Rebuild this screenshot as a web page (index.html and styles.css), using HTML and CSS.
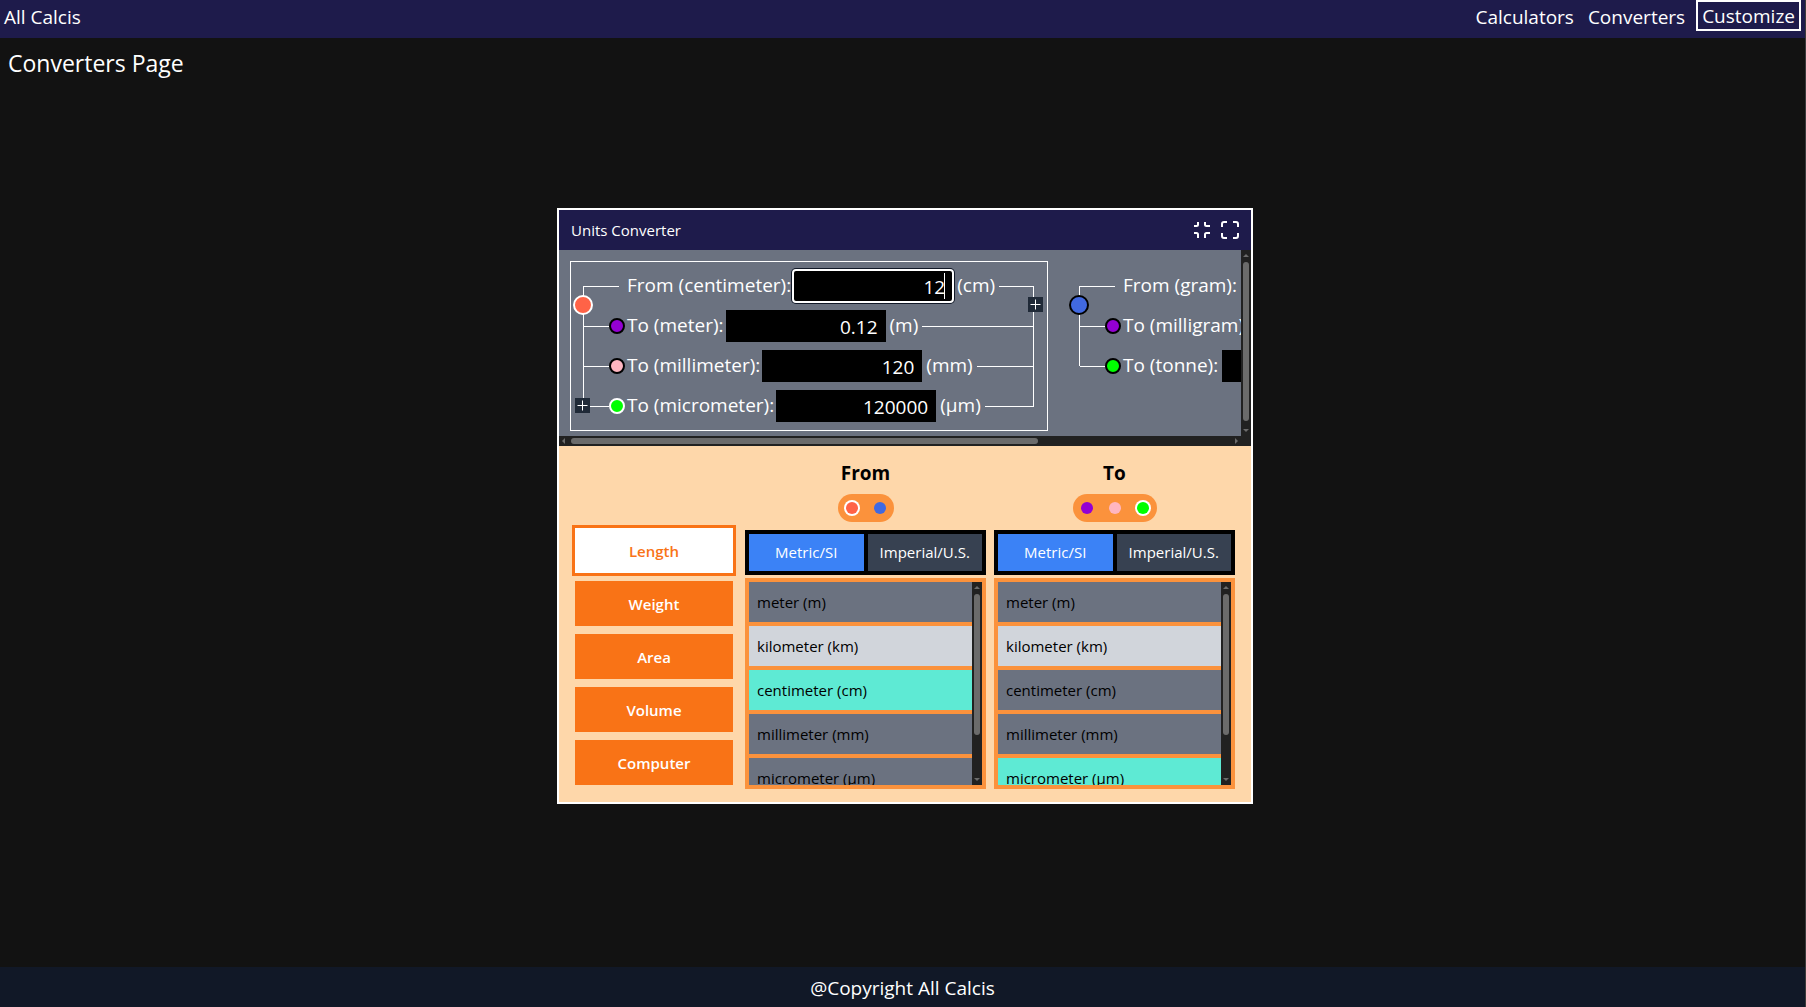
FILE: index.html
```html
<!DOCTYPE html>
<html lang="en">
<head>
<meta charset="utf-8">
<title>All Calcis</title>
<link rel="stylesheet" href="styles.css">
</head>
<body>
<header class="topbar">
  <a class="brand" href="#">All Calcis</a>
  <nav class="links">
    <a href="#">Calculators</a>
    <a href="#">Converters</a>
    <button class="customize" type="button">Customize</button>
  </nav>
</header>
<main class="page">
  <h1 class="title">Converters Page</h1>
  <section class="window">
    <div class="window-head">
      <h2>Units Converter</h2>
      <div class="window-actions">
        <button type="button" aria-label="Minimize"><svg viewBox="0 0 18 18"><path d="M1 5h2.500q1.500 0 1.500-1.500V1M12 1v2.500q0 1.500 1.500 1.500H17M1 12h2.500q1.500 0 1.500 1.500V17M12 17v-3.500q0-1.500 1.500-1.500H17"/></svg></button>
        <button type="button" aria-label="Full screen"><svg viewBox="0 0 18 18"><path d="M1 6V3q0-2 2-2h3M12 1h3q2 0 2 2v3M17 12v3q0 2-2 2h-3M6 17H3q-2 0-2-2v-3"/></svg></button>
      </div>
    </div>

    <div class="display">
      <div class="canvas">
        <div class="group active">
          <div class="row from"><i class="stub"></i><label for="cm">From (centimeter):</label><span class="field"><input id="cm" class="focused" type="text" value="12"><i class="caret"></i></span><span class="unit">(cm)</span><i class="tail"></i></div>
          <div class="row"><i class="stub"></i><i class="dot violet"></i><label for="m">To (meter):</label><span class="field"><input id="m" type="text" value="0.12"></span><span class="unit">(m)</span><i class="tail"></i></div>
          <div class="row"><i class="stub"></i><i class="dot pink"></i><label for="mm">To (millimeter):</label><span class="field"><input id="mm" type="text" value="120"></span><span class="unit">(mm)</span><i class="tail"></i></div>
          <div class="row"><i class="stub"></i><i class="dot lime selected"></i><label for="um">To (micrometer):</label><span class="field"><input id="um" type="text" value="120000"></span><span class="unit">(μm)</span><i class="tail"></i></div>
          <i class="rail rail-left"></i>
          <i class="rail rail-right"></i>
          <i class="node tomato selected"></i>
          <button class="plus plus-to" type="button" aria-label="Add to"><svg viewBox="0 0 15 15"><path d="M2.500 7.500h10M7.500 2.500v10"/></svg></button>
          <button class="plus plus-from" type="button" aria-label="Add from"><svg viewBox="0 0 15 15"><path d="M2.500 7.500h10M7.500 2.500v10"/></svg></button>
        </div>
        <div class="group short">
          <div class="row from"><i class="stub"></i><label for="g">From (gram):</label><span class="field"><input id="g" type="text"></span></div>
          <div class="row"><i class="stub"></i><i class="dot violet"></i><label for="mg">To (milligram):</label><span class="field"><input id="mg" type="text"></span></div>
          <div class="row"><i class="stub"></i><i class="dot lime"></i><label for="t">To (tonne):</label><span class="field"><input id="t" type="text"></span></div>
          <i class="rail rail-left"></i>
          <i class="node royal"></i>
        </div>
      </div>
      <div class="bar vertical"><i class="arrow up"></i><i class="thumb"></i><i class="arrow down"></i></div>
      <div class="bar horizontal"><i class="arrow left"></i><i class="thumb"></i><i class="rest"></i><i class="arrow right"></i></div>
      <div class="bar"></div>
    </div>

    <div class="panel">
      <div class="kinds">
        <button class="current" type="button">Length</button>
        <button type="button">Weight</button>
        <button type="button">Area</button>
        <button type="button">Volume</button>
        <button type="button">Computer</button>
      </div>
      <div class="choices">
        <div class="choice">
          <h3>From</h3>
          <div class="pill"><i class="tomato selected"></i><i class="royal"></i></div>
          <div class="systems"><button class="current" type="button">Metric/SI</button><button type="button">Imperial/U.S.</button></div>
          <div class="list">
            <ul>
              <li>meter (m)</li>
              <li class="hover">kilometer (km)</li>
              <li class="picked">centimeter (cm)</li>
              <li>millimeter (mm)</li>
              <li>micrometer (μm)</li>
            </ul>
            <div class="bar vertical"><i class="arrow up"></i><i class="thumb"></i><i class="rest"></i><i class="arrow down"></i></div>
          </div>
        </div>
        <div class="choice">
          <h3>To</h3>
          <div class="pill"><i class="violet"></i><i class="pink"></i><i class="lime selected"></i></div>
          <div class="systems"><button class="current" type="button">Metric/SI</button><button type="button">Imperial/U.S.</button></div>
          <div class="list">
            <ul>
              <li>meter (m)</li>
              <li class="hover">kilometer (km)</li>
              <li>centimeter (cm)</li>
              <li>millimeter (mm)</li>
              <li class="picked">micrometer (μm)</li>
            </ul>
            <div class="bar vertical"><i class="arrow up"></i><i class="thumb"></i><i class="rest"></i><i class="arrow down"></i></div>
          </div>
        </div>
      </div>
    </div>
  </section>
</main>
<footer class="footer">@Copyright All Calcis</footer>
</body>
</html>
```
FILE: styles.css
```css
*, *::before, *::after { box-sizing: border-box; }
body {
  margin: 0;
  min-height: 100vh;
  display: flex;
  flex-direction: column;
  background: #121212;
  border-right: 1px solid #3c3c3c;
  color: #fff;
  font: 19px/28px "Open Sans", "Noto Sans", sans-serif;
}
h1, h2, h3, ul { margin: 0; padding: 0; font-weight: 400; list-style: none; }
button, input { font: inherit; color: inherit; border: 0; padding: 0; margin: 0; background: none; border-radius: 0; }
a { color: inherit; text-decoration: none; }
svg { display: block; fill: none; stroke: #fff; }

.topbar { display: flex; justify-content: space-between; align-items: flex-start; height: 38px; padding: 0 4px; background: #1e1b4b; }
.brand { padding-top: 3px; }
.links { display: flex; gap: 14px; }
.links a { padding-top: 3px; }
.links .customize { height: 31px; margin-left: -3px; padding: 0 4px; border: 2px solid #fff; }

.page { flex: 1; display: flex; flex-direction: column; padding: 0 0 45px 5px; }
.title { padding: 7px 3px 9px; font-size: 23px; line-height: 36px; }
.footer { height: 40px; line-height: 42px; text-align: center; background: #111827; }

.window { width: 100%; max-width: 696px; margin: auto; border: 2px solid #fff; font-size: 15px; line-height: 24px; }
.window-head { display: flex; justify-content: space-between; align-items: center; height: 40px; padding: 0 12px; background: #1e1b4b; }
.window-head h2 { font-size: 15px; }
.window-actions { display: flex; gap: 10px; }
.window-actions svg { width: 18px; height: 18px; stroke-width: 2; }

.tomato { background: #ff6347; }
.royal { background: #4169e1; }
.violet { background: #9400d3; }
.pink { background: #ffb6c1; }
.lime { background: #00ff00; }

.display { display: grid; grid-template-columns: 1fr 10px; grid-template-rows: 186px 10px; background: #6b7280; }
.canvas { display: flex; align-items: flex-start; gap: 18px; min-width: 0; overflow: hidden; padding: 11px 0 0 11px; }
.group { position: relative; flex: none; width: 478px; padding: 4px 13px; border: 1px solid transparent; font-size: 19px; }
.group.active { border-color: #fff; }
.row { display: flex; align-items: center; height: 40px; }
.row label, .row .unit { white-space: nowrap; padding-bottom: 2px; }
.field { position: relative; display: flex; margin-left: 2px; }
.short .field { margin-left: 4px; }
.row input { width: 160px; height: 32px; padding: 2px 8px 0 8px; background: #000; text-align: right; }
.row input.focused { outline: 2px solid #fff; outline-offset: -1px; border-radius: 3px; box-shadow: 0 0 0 2px #111827; }
.caret { position: absolute; right: 8px; top: 3px; width: 1px; height: 26px; background: #fff; }
.row .unit { margin: 0 4px; }
.stub { width: 25px; height: 1px; background: #fff; }
.from .stub { width: 35px; margin-right: 8px; }
.tail { flex: 1; height: 1px; background: #fff; }
.dot { width: 16px; height: 16px; margin-right: 2px; border: 2px solid #000; border-radius: 50%; }
.dot.selected, .node.selected { border-color: #fff; }
.rail { position: absolute; top: 24px; bottom: 24px; width: 1px; background: #fff; }
.rail-left { left: 12px; }
.rail-right { right: 13px; }
.node { position: absolute; left: 2px; top: 33px; width: 20px; height: 20px; border: 2px solid #000; border-radius: 50%; }
.plus { position: absolute; width: 15px; height: 15px; background: #1f2937; }
.plus-to { left: 4px; bottom: 17px; }
.plus-from { right: 4px; top: 35px; }

.bar { display: flex; align-items: center; background: #212121; }
.bar.vertical { flex-direction: column; width: 10px; padding: 4px 0; }
.bar.horizontal { padding: 0 3px; }
.thumb { background: #6b6b6b; border-radius: 3px; }
.display .vertical .thumb { flex: 1; width: 6px; margin: 5px 0 8px; }
.horizontal .thumb { flex: 71; height: 6px; margin-left: 6px; }
.horizontal .rest { flex: 30; }
.list .thumb { flex: 141; width: 6px; margin-top: 5px; }
.list .rest { flex: 43; }
.arrow { border: 3px solid transparent; }
.arrow.up { border-top: 0; border-bottom-color: #6b6b6b; }
.arrow.down { border-bottom: 0; border-top-color: #6b6b6b; }
.arrow.left { border-left: 0; border-right-color: #6b6b6b; }
.arrow.right { border-right: 0; border-left-color: #6b6b6b; }

.panel { display: flex; align-items: flex-end; gap: 12px; padding: 11px 16px 13px; background: #fed7aa; color: #000; }
.kinds { display: flex; flex-direction: column; gap: 8px; width: 158px; padding-bottom: 4px; }
.kinds button { height: 45px; background: #f97316; color: #fff; font-weight: 600; }
.kinds .current { background: #fff; color: #f97316; box-shadow: 0 0 0 3px #f97316; }
.choices { flex: 1; display: grid; grid-template-columns: 1fr 1fr; gap: 8px; }
.choice { display: flex; flex-direction: column; align-items: center; }
.choice h3 { font-size: 19px; line-height: 32px; font-weight: 700; }
.pill { display: flex; align-items: center; height: 28px; margin: 5px 0 8px; border-radius: 14px; background: #fb923c; }
.pill i { width: 12px; height: 12px; margin: 0 8px; border-radius: 50%; }
.pill .selected { box-shadow: 0 0 0 2px #fff; }
.systems { display: flex; gap: 4px; width: 100%; height: 45px; padding: 4px; background: #000; }
.systems button { flex: 1; padding-bottom: 2px; background: #374151; color: #fff; }
.systems .current { background: #3b82f6; }
.list { display: flex; width: 100%; height: 211px; margin-top: 3px; border: 4px solid #fb923c; overflow: hidden; }
.list ul { flex: 1; background: #fb923c; }
.list li { height: 40px; margin-bottom: 4px; padding: 0 8px; line-height: 40px; background: #6b7280; }
.list .hover { background: #d1d5db; }
.list .picked { background: #5eead4; }
```
